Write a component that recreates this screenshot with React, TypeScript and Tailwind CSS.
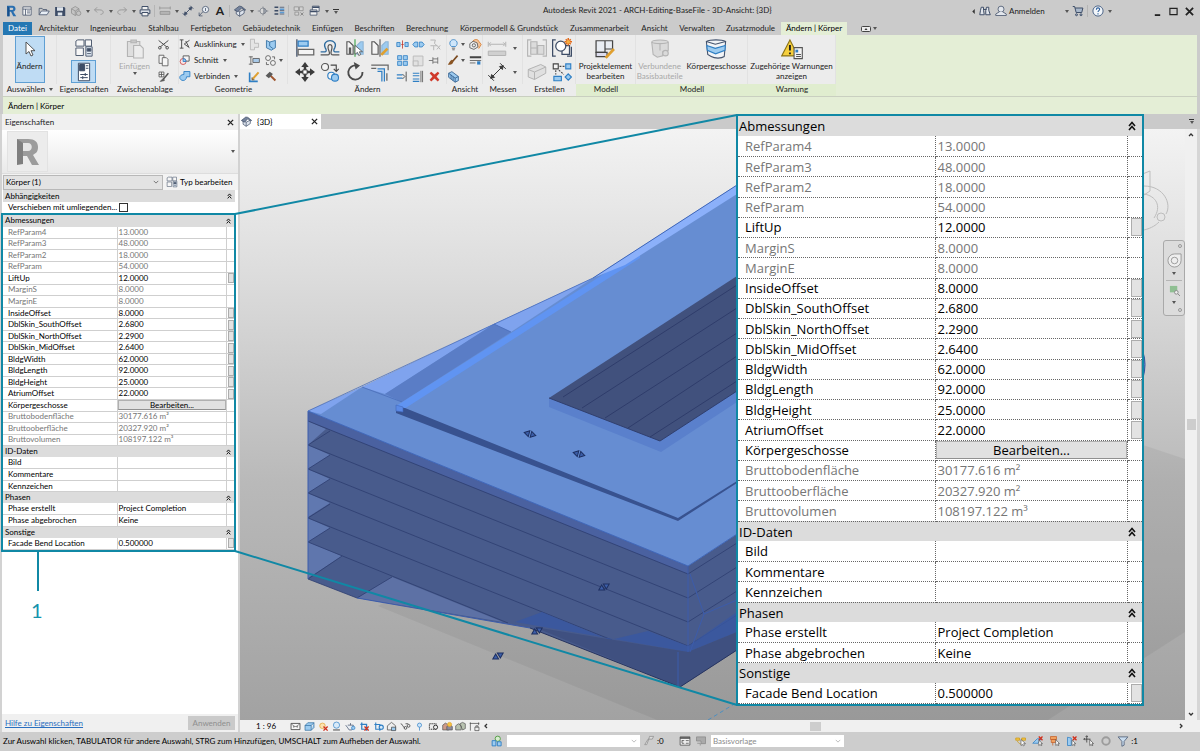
import type { ReactNode } from "react";

const INK = "#3d4c66";
const BLUE = "#9ccbf0";
const EDGE = "#2f7fc4";
const GREY = "#b4b4b4";

const icons: Record<string, ReactNode> = {
  revit: (
    <>
      <path d="M3 1h7c3 0 4 2 4 4s-1 3-3 4l4 6h-4L8 9H6v6H3z" fill="#2a6fb0" />
      <path d="M6 3.500h3.500c2 0 2 3 0 3H6z" fill="#cbcbcb" />
      <path d="M3 1l3 2.500V15H3z" fill="#17508c" />
    </>
  ),
  home: (
    <g fill="none" stroke={INK}>
      <path d="M2.500 2.500h11v11h-11z" fill="#f4f4f4" />
      <path d="M2.500 5.500h11M6 5.500v8M8 8h4M8 10.500h4" />
    </g>
  ),
  open: (
    <g fill="none" stroke={INK}>
      <path d="M1.500 13V4.500h4l1 1.500h5v2" />
      <path d="M1.500 13l3-5h10.500l-3 5z" fill="#e8eef5" />
    </g>
  ),
  save: (
    <>
      <path d="M1.500 2.500h12l1.500 1.500v10.500H1.500z" fill={INK} />
      <path d="M4 3h8v4.500H4zM5 10h6v4H5z" fill="#dfe5ec" />
    </>
  ),
  sync: (
    <g fill="#c4c4c4" stroke="#8e8e8e">
      <path d="M2 5l5-3 5 3v6l-5 3-5-3z" />
      <path d="M2 5l5 3 5-3M7 8v6" fill="none" />
      <circle cx="11.500" cy="11" r="3" />
    </g>
  ),
  undo: <path d="M5.500 3L2 6.500 5.500 10M2 6.500h7c6 0 6 6 1 6" fill="none" stroke="#999" strokeWidth="1.300" />,
  redo: <path d="M10.500 3L14 6.500 10.500 10M14 6.500H7c-6 0-6 6-1 6" fill="none" stroke="#999" strokeWidth="1.300" />,
  print: (
    <g stroke={INK} fill="#f2f2f2" strokeWidth="1.300">
      <path d="M4 6V2h8v4" />
      <path d="M1.500 6.500h13v5h-13z" fill="#d9dee6" />
      <path d="M4 10h8v4.500H4z" />
    </g>
  ),
  ruler: (
    <g stroke="#8e8e8e" fill="none">
      <path d="M1 4h14M1 2v4M15 2v4" />
      <path d="M1.500 8.500h13v4h-13z" fill="#b5b5b5" />
    </g>
  ),
  dim: (
    <g stroke={INK} fill={INK}>
      <path d="M3 13L13 3M1 11l4 4M11 1l4 4" strokeWidth="1.200" />
      <path d="M3 13l1-4 3 3zM13 3l-1 4-3-3z" />
    </g>
  ),
  tag: (
    <g stroke={INK} fill="none">
      <circle cx="10" cy="6" r="4.200" fill="#e9eef4" />
      <path d="M10 4v4M6.500 9L1.500 14.500M1.500 10v4.500H6" />
    </g>
  ),
  house: (
    <g stroke={INK} fill="#dfe5ee">
      <path d="M3 6.500l4.500 2.500 6-3v5l-6 4L3 12z" />
      <path d="M7.500 9v6" fill="none" />
      <path d="M.5 6.500l6.500-5 3 .5 5.500 4.500-1.500.5-4-3-5 5z" fill="#75839c" />
    </g>
  ),
  section: (
    <g stroke="#7a7f88" fill="#d8d8d8">
      <path d="M1 8h3M12 8h3M8 2v12" />
      <circle cx="8" cy="8" r="4" />
      <path d="M9 4l4 4-4 4z" fill="#9aa0aa" />
    </g>
  ),
  thin: (
    <>
      <path d="M2 3h5M2 7.500h5M2 12h5" stroke={INK} strokeWidth="2" />
      <path d="M9 3h6M9 7.500h6M9 12h6" stroke={INK} />
      <path d="M9 4.500h6v2H9zM9 9h6v2H9z" fill="#5b9bd5" />
    </>
  ),
  closewin: (
    <g stroke="#8e8e8e" fill="#d3d3d3">
      <path d="M1.500 2.500h6v5h-6zM8.500 2.500h5v5h-5zM2.500 9.500h5v4h-5z" />
      <path d="M10 10l4 4M14 10l-4 4" stroke="#777" />
    </g>
  ),
  switchwin: (
    <g stroke={INK} fill="#f2f2f2">
      <path d="M4.500 1.500h9v7h-9z" />
      <path d="M1.500 6.500h9v7h-9z" />
      <path d="M4.500 3h9M1.500 8.500h9" strokeWidth="2" />
    </g>
  ),
  binoculars: (
    <g stroke={INK} fill="#e2e6ec" strokeWidth="1.300">
      <path d="M3 3h3v4l1 6H1l1-6zM10 3h3v4l2 6H9V7z" />
      <path d="M6 6h4" />
    </g>
  ),
  person: (
    <g stroke={INK} fill="#e2e6ec">
      <circle cx="8" cy="5.500" r="4" />
      <path d="M6 9l-5 3v2h14v-2l-5-3" />
    </g>
  ),
  cart: (
    <g stroke={INK} fill="#a9b8cb" strokeWidth="1.300">
      <path d="M1 2h2.500l2 8h7.500l1.500-6H4" />
      <circle cx="6" cy="13" r="1.300" />
      <circle cx="12" cy="13" r="1.300" />
    </g>
  ),
  help: (
    <>
      <circle cx="8" cy="8" r="6.800" fill="#f2f6fa" stroke="#4a6387" strokeWidth="1.300" />
      <path d="M5.800 6.200c0-3 4.400-3 4.400-.4 0 1.700-2.200 1.700-2.200 3.600M8 11v1.600" fill="none" stroke="#2e5f9a" strokeWidth="1.500" />
    </>
  ),
  cursor: <path d="M4 1v12l3-2.500 2 4.500 2-1-2-4.300h4z" fill="#fff" stroke="#444" strokeWidth=".9" />,
  typeprops: (
    <g stroke="#525f73" fill="#f7f7f7" strokeWidth=".8">
      <path d="M1.500 2.500l1.500-1h5v5h-6.500zM9 1.500h5v5H9zM1.500 8h6v6H1.500z" />
      <path d="M9.500 7h5v7.500h-5z" fill="#e5eef8" />
      <path d="M10.500 8.500h3v2h-3z" fill={INK} />
      <path d="M10.500 12.500h3" />
    </g>
  ),
  props: (
    <g stroke={INK} strokeWidth=".8">
      <path d="M3.500 1h9v14h-9z" fill="#fff" />
      <path d="M4.500 2h4v5h-4z" fill={INK} />
      <path d="M9.500 3h2M9.500 5h2M5 10h6M5 12.500h6M9 8.800v2.400M7 11.300v2.400" />
    </g>
  ),
  paste: (
    <g stroke={GREY} fill="#dedede" strokeWidth=".8">
      <path d="M2.500 2.500h9v11h-9z" />
      <path d="M5 1.500h4v2H5z" fill="#c8c8c8" />
      <path d="M7 5.500h5l2 2v7H7z" fill="#ececec" />
    </g>
  ),
  cut: (
    <g stroke="#4a4a4a" fill="none" strokeWidth="1.200">
      <path d="M2 3l10 8M14 3L4 11" />
      <circle cx="3.500" cy="12" r="1.600" />
      <circle cx="12.500" cy="12" r="1.600" />
    </g>
  ),
  copy: (
    <g stroke="#555" fill="#f6f6f6">
      <path d="M2.500 1.500h6v10h-6z" />
      <path d="M6.500 4.500h5l2 2v8h-7z" />
    </g>
  ),
  match: (
    <g stroke="#555" fill="none">
      <path d="M2.500 2.500h6v6h-6zM2.500 5.500h6M5.500 2.500v6" fill="#f6f6f6" />
      <path d="M14 4L8 11" strokeWidth="1.800" />
      <path d="M8 10l-4 4 5-1z" fill="#555" />
    </g>
  ),
  cope: (
    <g stroke="#444" fill="none" strokeWidth="1.200">
      <path d="M1 2.500h5M3.500 2.500v11M1 13.500h5" />
      <path d="M14 3L7 8l7 5M9 4l4 8" />
    </g>
  ),
  cutgeo: (
    <g strokeWidth="1.200">
      <path d="M5.500 2.500h8v7h-8z" fill="#f6f6f6" stroke="#555" />
      <circle cx="5.500" cy="10" r="4" fill="#f8e4e4" stroke="#c55" />
      <path d="M5.500 6a4 4 0 014 4h-4z" fill={BLUE} stroke={EDGE} />
    </g>
  ),
  join: (
    <g fill={BLUE} stroke={EDGE} strokeWidth="1.200">
      <path d="M6.500 2h8v7H10c0 3-2 5-4.500 5S1 12 1 10s2-4 5.500-4z" />
    </g>
  ),
  wallcut: (
    <g stroke={GREY} fill="#e4e4e4">
      <path d="M3 1.500h5v5h5v5H8v3H3z" />
    </g>
  ),
  splitface: (
    <g stroke="#2c6a9e" fill={BLUE}>
      <path d="M3 3l4 2 7-2v9l-5 3-6-3z" />
      <path d="M7 5v5l4 3" fill="none" />
    </g>
  ),
  beam: (
    <g stroke="#555" fill="#f2f2f2">
      <path d="M1 3.500h5M1 12.500h5M3.500 3v10" />
      <path d="M6 5.500h8v5H6z" fill="#a8c9e8" />
    </g>
  ),
  gears: (
    <g stroke="#555" fill="#f2f2f2">
      <circle cx="5" cy="5" r="3" />
      <circle cx="11" cy="11" r="3" />
      <path d="M10 3.500h3v3M3 10v3h3" fill="none" />
    </g>
  ),
  wall: (
    <>
      <path d="M2 3v11h10" stroke={EDGE} strokeWidth="2" fill="none" />
      <path d="M5 12l8-9" stroke="#e0a030" strokeWidth="2.500" />
      <path d="M5 9v3h3" stroke="#555" fill="none" />
    </>
  ),
  hammer: (
    <>
      <path d="M7 6l7 7" stroke="#a0562f" strokeWidth="2.500" />
      <path d="M2 7l5-5 4 3-5 5z" fill="#5a5a5a" />
    </>
  ),
  align: (
    <g strokeWidth="1">
      <path d="M1.500 1v14" stroke={INK} />
      <path d="M2.500 2.500h8v4h-8z" fill={BLUE} stroke={EDGE} />
      <path d="M2.500 9h12.500v4.500H2.500z" fill="#f4f4f4" stroke="#666" />
    </g>
  ),
  offset: (
    <g fill="none">
      <path d="M.5 11h3.500c1.500 0 1-2 .2-3C2.500 4.500 5 2 8 2s5.500 2.500 3.800 6c-.8 1-1.300 3 .2 3h3.500" stroke="#2c6a9e" />
      <path d="M.5 13.500h5.500c1.500 0 2-1 1.200-3C6.500 9 6 8 6.500 6.500c.5-1.600 2.500-1.600 3 0 .4 1.500 0 2.500-.5 4-.6 2 0 3 1.500 3h5" stroke="#555" />
    </g>
  ),
  mirroraxis: (
    <g strokeWidth=".9">
      <path d="M1.500 3h2l3 3v7h-2v-5l-1 0v5h-2z" fill="#f4f4f4" stroke="#555" />
      <path d="M14.500 3h-2l-3 3v7h5z" fill={BLUE} stroke="#8fb5d6" />
      <path d="M8 1v14" stroke="#3da54a" />
      <path d="M8 6v7l2-1.500 1 2.500 1.500-.7-1-2.300h2.500z" fill="#fff" stroke="#444" strokeWidth=".6" />
    </g>
  ),
  mirrordraw: (
    <g strokeWidth=".9">
      <path d="M1.500 3h2l3 3v7h-5z" fill="#f4f4f4" stroke="#555" />
      <path d="M14.500 3h-2l-3 3v7h5z" fill={BLUE} stroke="#8fb5d6" />
      <path d="M8 1v14" stroke="#555" />
      <path d="M9 13.500l5-5" stroke="#e0a030" strokeWidth="2.200" />
    </g>
  ),
  move: (
    <g fill="#3b3b3b">
      <path d="M8 0l3 4H9v3H7V4H5zM8 16l3-4H9V9H7v3H5zM0 8l4-3v2h3v2H4v2zM16 8l-4-3v2H9v2h3v2z" />
      <path d="M6.300 6.300h3.400v3.400H6.300z" fill="#fff" stroke="#3b3b3b" strokeWidth=".8" />
    </g>
  ),
  copyobj: (
    <g strokeWidth=".9">
      <circle cx="4" cy="4" r="2.800" fill="#f4f4f4" stroke="#555" />
      <circle cx="9" cy="11" r="2.800" fill="#f4f4f4" stroke={EDGE} />
      <circle cx="12" cy="12.500" r="2.800" fill={BLUE} stroke={EDGE} />
      <path d="M8.500 2.500H13V7M11 5.500l2 2 2-2" fill="none" stroke="#444" />
    </g>
  ),
  rotate: (
    <>
      <path d="M9.500 2.800A5.700 5.700 0 1014 8" fill="none" stroke="#4a4a4a" strokeWidth="1.500" />
      <path d="M7 0l5 2.800L8.500 6z" fill="#4a4a4a" />
    </>
  ),
  trim: (
    <g fill="none">
      <path d="M6 5.500h5.500v10M6 7.500h3.500v8" stroke={EDGE} />
      <path d="M1 2.500h14M1 5h4M14.500 2.500v4M13.500 9v6" stroke="#666" />
    </g>
  ),
  split: (
    <g fill={BLUE} stroke={EDGE}>
      <path d="M1 5.500h4v5H1zM11 5.500h4v5h-4z" />
      <path d="M8 3v10M6.500 8h3" stroke="#c0392b" />
    </g>
  ),
  splitgap: (
    <g fill={BLUE} stroke={EDGE}>
      <path d="M1 8l2.500-3H7v6H3.500zM15 8l-2.500-3H9v6h3.500z" />
    </g>
  ),
  unpin: (
    <g fill="none" stroke={GREY} strokeWidth="1.200">
      <path d="M3 2.500h6l-1 4 3 3H3M7 10v5M11 9l4 5M15 9l-4 5" />
    </g>
  ),
  array: (
    <g fill={BLUE} stroke={EDGE}>
      <path d="M2 2h5v5H2zM9 2h5v5H9zM2 9h5v5H2zM9 9h5v5H9z" />
    </g>
  ),
  scale: (
    <g fill="#e2e2e2" stroke={GREY}>
      <path d="M1.500 2.500h12v12h-12z" />
      <path d="M1.500 8.500h6v6h-6z" />
    </g>
  ),
  pin: (
    <g fill="#e2e2e2" stroke="#666">
      <path d="M1 8h5M6 4v8M6 6h6M6 10h6M12 4v8" />
    </g>
  ),
  trimone: (
    <g fill="none">
      <path d="M1 6h7M1 10h7" stroke={EDGE} strokeWidth="1.500" />
      <path d="M12.500 2v12M8 5l3 3-3 3" stroke="#555" strokeWidth="1.200" />
    </g>
  ),
  trimmany: (
    <g fill="none">
      <path d="M1 4h8M1 7h8M1 11h8M1 14h8" stroke={EDGE} strokeWidth="1.300" />
      <path d="M13 1v14M11 1v14" stroke="#555" />
    </g>
  ),
  remove: <path d="M2 4l2-2 4 3.500L12 2l2 2-3.500 4L14 12l-2 2-4-3.500L4 14l-2-2 3.500-4z" fill="#d03a2c" />,
  bulb: (
    <g fill="#cfe6fa" stroke={EDGE}>
      <path d="M5.500 10.500C1.500 7 4 2 8 2s6.500 5 2.500 8.500z" />
      <path d="M6 12.500h4M6.500 14.500h3" stroke="#555" />
    </g>
  ),
  paint: (
    <>
      <path d="M13 2L7 9" stroke="#7a4a20" strokeWidth="2" />
      <path d="M8 8l-2-1c-3 1-3 4-5 6 4 1 7-1 7-5z" fill="#8a5423" />
    </>
  ),
  box3d: (
    <g fill={BLUE} stroke="#2c5a8a">
      <path d="M2 4l4-2 8 6v5l-4 2-8-6z" />
      <path d="M2 4l8 6 4-2M10 10v5M5 6v5M7.500 8v5" fill="none" />
    </g>
  ),
  override: (
    <g stroke="#555" fill="#ececec">
      <path d="M4 5c2-4 7-4 8-1l3 4-3 5" stroke="#d97a2b" fill="#f3c39a" />
      <path d="M1 7l4-3 5 2 1 5-5 3-5-2z" />
      <circle cx="6" cy="9" r="2" fill="none" />
    </g>
  ),
  lines: (
    <>
      <path d="M1 4h14" stroke="#444" strokeWidth="2.500" />
      <path d="M1 8h14M1 11h7" stroke="#555" />
      <path d="M10 9h4v4h-4z" fill={EDGE} />
    </>
  ),
  measure: (
    <g stroke={GREY} fill="#d0d0d0">
      <path d="M2 5h12M1 3v4M15 3v4M3 3.500L1.500 5 3 6.500M13 3.500L14.500 5 13 6.500" fill="none" strokeWidth=".8" />
      <path d="M1 10.500h14V14H1z" strokeWidth=".8" />
    </g>
  ),
  measurediag: (
    <g stroke="#3b3b3b" fill="#3b3b3b" strokeWidth=".8">
      <path d="M3 13L13 3M1 10.500L5.500 15M10.500 1L15 5.500" />
      <path d="M3 13l.7-3 2.300 2.300zM13 3l-.7 3L10 3.700z" />
    </g>
  ),
  group: (
    <g stroke={GREY} fill="none" strokeWidth=".9">
      <path d="M3.500 1.500h-3v13h3M12.500 1.500h3v13h-3" />
      <path d="M3 3h5v5H3zM3 8h5v5H3zM8.500 6h5v7h-5z" fill="#dcdcdc" />
    </g>
  ),
  assembly: (
    <g stroke={INK} fill="none" strokeWidth="1">
      <path d="M3 1.500H.5v13H3M12 14.500h3.500V7" />
      <path d="M8 6h6v7H8z" fill="#f4f4f4" />
      <circle cx="7" cy="6.500" r="4" fill="#fff" />
      <path d="M13 0v6M10 3h6M11 1l4 4M15 1l-4 4" stroke="#e26a1b" strokeWidth="1.200" />
      <circle cx="13" cy="3" r="1.500" fill="#f5b042" stroke="none" />
    </g>
  ),
  similar: (
    <g stroke={GREY} fill="#e0e0e0" strokeWidth=".8">
      <path d="M1 6l10-4 4 2v5l-9 5-5-2z" />
      <path d="M1 6l5 2 9-4M6 8v6" fill="none" />
    </g>
  ),
  family: (
    <g strokeWidth=".9">
      <path d="M1 1.500h4v4H1z" fill="#f4f4f4" stroke="#444" />
      <path d="M11 1.500h4v4h-4zM1.500 11.500h6v3.500h-6z" fill={BLUE} stroke={EDGE} />
      <path d="M6 3.500h4M5.500 6.500l4 3.500M3 6.500V10" stroke="#444" strokeDasharray="1.500 1" />
      <path d="M13 9.500l2.500 2.500-2.500 2.500L10.500 12z" fill={BLUE} stroke={EDGE} />
    </g>
  ),
  editmass: (
    <g strokeWidth=".9">
      <path d="M1.500 2h6.500v8.500H1.500zM8 2h5.500v6H8z" fill="#e9edf3" stroke="#444" />
      <path d="M1.500 10.500h8v3h-8z" fill="#dde" stroke="#444" />
      <path d="M8.500 14.500l6-6.500" stroke="#e0a030" strokeWidth="2" />
    </g>
  ),
  joined: (
    <g stroke={GREY} fill="#dadada" strokeWidth=".8">
      <path d="M2 3c0-2 12-2 12 0v6c-1 1-3 1-4 1v3L6 14 3 12z" />
      <path d="M2 3c2 1.500 10 1.500 12 0M8 4.500V9" fill="none" />
      <circle cx="12" cy="11" r="2" />
    </g>
  ),
  floors: (
    <g stroke="#44546e" fill="#f2f4f7" strokeWidth=".8">
      <path d="M1 2.500c3-1.500 11-1.500 14 0l-1 11c-2 1.500-7 1.500-9.500 0L2 12z" />
      <path d="M1.300 5.500l6.200 2 7.300-2-.3 3.500-6.800 2.500-6-2.500z" fill={BLUE} stroke={EDGE} />
      <path d="M1 2.500l6.500 2 7.500-2" fill="none" />
    </g>
  ),
  warning: (
    <g strokeWidth=".8">
      <path d="M6.500 1.500l6 11.500H.5z" fill="#f6cf3c" stroke="#8a7216" />
      <path d="M6.500 5v4M6.500 10.500v1.300" stroke="#222" strokeWidth="1.400" />
      <path d="M9.500 7h6v8h-6z" fill="#f4f4f4" stroke="#555" />
      <path d="M10.500 8.500h2v2h-2z" fill={EDGE} />
      <path d="M11 12h3.500M11 13.500h3.500" stroke="#555" />
    </g>
  ),
  detail: (
    <g stroke="#444" fill="#f7f7f7" strokeWidth="1.200">
      <path d="M1.500 3.500h13v9h-13z" />
      <path d="M5 8h6M5.500 6v4M10.500 6v4M2 4l3 3M14 4l-3 3" fill="none" strokeWidth=".8" />
    </g>
  ),
  visual: (
    <g fill={BLUE} stroke="#2c6a9e">
      <path d="M1.500 6.500h9v7h-9zM1.500 6.500l4-4h9l-4 4M10.500 13.500l4-4v-7" />
    </g>
  ),
  sunoff: (
    <>
      <circle cx="6.500" cy="7" r="4" fill="#fbe2b0" stroke="#e0a030" />
      <path d="M8 8l6 6M14 8l-6 6" stroke="#d0301c" strokeWidth="2" />
    </>
  ),
  shadow: (
    <g fill="#d9ebf9" stroke={EDGE}>
      <circle cx="8" cy="6" r="4.500" />
      <path d="M3 13h10" strokeWidth="2" stroke="#777" />
    </g>
  ),
  teapot: (
    <g fill="#e9eef3" stroke={INK}>
      <path d="M4 6h8v4l-2 3H6l-2-3L1 6M8 3v3" />
      <circle cx="12" cy="10" r="2.500" fill={BLUE} stroke={EDGE} />
    </g>
  ),
  cropoff: (
    <>
      <path d="M4 2v10h10M2 5h9v9" fill="none" stroke={EDGE} strokeWidth="1.800" />
      <path d="M8 8l6 6M14 8l-6 6" stroke="#d0301c" strokeWidth="2" />
    </>
  ),
  crop: (
    <g fill="none" stroke={EDGE} strokeWidth="1.600">
      <path d="M4 2v10h8M2 5h8v9" />
      <circle cx="12" cy="9" r="3" fill="#d9ebf9" />
    </g>
  ),
  lock3d: (
    <g fill="#eee" stroke="#444">
      <path d="M2 7l6-5 6 5v6H2z" />
      <path d="M8 9h6v5H8z" fill={BLUE} />
    </g>
  ),
  glasses: (
    <g fill="none" stroke="#444" strokeWidth="1.200">
      <path d="M1 4c3 0 2 4 6 6" />
      <circle cx="8" cy="10" r="2" />
      <circle cx="12.500" cy="7" r="2" />
      <path d="M8 4l4 0" />
    </g>
  ),
  pinbulb: (
    <g fill="#cfe6fa" stroke={EDGE}>
      <circle cx="8" cy="6" r="3" />
      <path d="M8 9v5" />
    </g>
  ),
  tempview: (
    <g fill="#eee" stroke="#333" strokeWidth="1.400">
      <path d="M2 4h10v8H2z" strokeDasharray="2 1" />
      <circle cx="11" cy="9" r="3" />
    </g>
  ),
  analytic: (
    <g stroke="#555">
      <path d="M1 6l4-3 5 3v7H1z" fill="#c98" />
      <path d="M7 8l4-3 4 3v5H7z" fill="#8e8a9a" />
      <circle cx="11" cy="5" r="3" fill="#f5c542" stroke="#e0a030" />
    </g>
  ),
  displace: (
    <g fill="#b8c2b0" stroke="#555">
      <path d="M1 7l4-3 4 3v6H1zM7 4l4-2 4 2v7l-4 2z" />
    </g>
  ),
  constraints: (
    <g fill="#eee" stroke="#444">
      <path d="M1 3.500h14M2 2v12M14 2v4M8.500 9h6v5h-6z" />
      <path d="M10 9V7h3v2" fill="none" />
    </g>
  ),
  worksets: (
    <g strokeWidth="1.200">
      <circle cx="9" cy="5" r="3.500" fill="#d7ecd0" stroke="#4c9a3c" />
      <path d="M1.500 7.500h5v7h-5zM8.500 9h5v5.500h-5z" fill={BLUE} stroke={EDGE} />
    </g>
  ),
  brush: (
    <g stroke="#888" fill="#ddd">
      <path d="M8 2h6l-2 4H7zM7 6l-3 8H1l5-8z" />
    </g>
  ),
  options: (
    <g stroke="#444" fill="#f4f4f4">
      <path d="M1.500 2.500h13v11h-13z" />
      <path d="M1.500 4h13" strokeWidth="2" />
      <path d="M4 7v4h3M9 7.500h4M9 11h4M4 7.500h3" fill="none" />
    </g>
  ),
  optionset: (
    <g stroke="#888" fill="#aaa">
      <path d="M2 2.500h12v9H8V8H2z" />
      <path d="M3 11h4v3" fill="none" />
    </g>
  ),
  sellink: (
    <g>
      <path d="M1 4h5v3H1zM9 4h5v3H9z" fill="#f5c542" stroke="#c99a1c" />
      <path d="M3 8c2 4 5 4 5 4" stroke="#c99a1c" fill="none" />
      <path d="M8 6v8l2-1.500 1 2 1.500-.7-1-2.300H14z" fill="#fff" stroke="#444" strokeWidth=".8" />
    </g>
  ),
  selunder: (
    <g>
      <path d="M1 11l6-6h5l-4 6z" fill={BLUE} stroke={EDGE} />
      <path d="M9 2l5 5M14 2L9 7" stroke="#d0301c" strokeWidth="1.800" />
      <path d="M9 7v7l2-1.500 1 2 1-.7-1-2.300h2z" fill="#fff" stroke="#444" strokeWidth=".8" />
    </g>
  ),
  selpinned: (
    <g>
      <path d="M2 2h8v4H2zM3 6h6v4H3z" fill="#f0a060" stroke="#c5622a" />
      <path d="M5 10v4" stroke="#c5622a" />
      <path d="M9 6v8l2-1.500 1 2 1-.7-1-2.300h2z" fill="#fff" stroke="#444" strokeWidth=".8" />
    </g>
  ),
  selface: (
    <g>
      <path d="M2 3l5 1v10H2z" fill={BLUE} stroke={EDGE} />
      <path d="M9 2l5 5M14 2L9 7" stroke="#d0301c" strokeWidth="1.800" />
      <path d="M8 7v7l2-1.500 1 2 1-.7-1-2.300h2z" fill="#fff" stroke="#444" strokeWidth=".8" />
    </g>
  ),
  dragsel: (
    <g stroke="#333" fill="none">
      <path d="M5 1v9M1 5.500h9M3.500 2.500L5 1l1.500 1.500M2.500 4L1 5.500 2.500 7" />
      <path d="M9 6v8l2-1.500 1 2 1-.7-1-2.300h2z" fill="#fff" strokeWidth=".8" />
    </g>
  ),
  ring: <circle cx="8" cy="8" r="5" fill="none" stroke="#9c9c9c" strokeWidth="2.500" />,
  filter: <path d="M1.500 2.500h13l-5 6v5l-3 1.500V8.500z" fill="#c9dcee" stroke="#44546e" />,
};

function Icon({ name, className = "size-[14px]" }: { name: string; className?: string }) {
  return (
    <svg viewBox="0 0 16 16" className={`shrink-0 ${className}`} aria-hidden="true">
      {icons[name]}
    </svg>
  );
}

function Caret({ className = "w-[7px]" }: { className?: string }) {
  return (
    <span className={`flex shrink-0 justify-center ${className}`}>
      <svg viewBox="0 0 4 3" className="h-[3px] w-[4px]" aria-hidden="true">
        <path d="M0 0h4L2 3z" fill="#555" />
      </svg>
    </span>
  );
}

function Divider() {
  return <span className="mx-px h-[12px] w-[2px] shrink-0 border-l border-[#b5b5b5]" />;
}

function Tool({ name, label }: { name: string; label: string }) {
  return (
    <button type="button" aria-label={label} className="flex w-[16px] shrink-0 justify-center">
      <Icon name={name} className="size-[12px]" />
    </button>
  );
}

function TitleBar() {
  return (
    <header className="flex h-[22px] items-center bg-[#cbcbcb] pl-[3px] text-[#222]">
      <div className="flex w-[540px] shrink-0 items-center">
        <Tool name="revit" label="Revit" />
        <Tool name="home" label="Start" />
        <span className="w-px" />
        <Tool name="open" label="Öffnen" />
        <Tool name="save" label="Speichern" />
        <Tool name="sync" label="Synchronisieren" />
        <Caret />
        <Tool name="undo" label="Rückgängig" />
        <Caret />
        <Tool name="redo" label="Wiederherstellen" />
        <Caret />
        <Tool name="print" label="Drucken" />
        <Divider />
        <Tool name="ruler" label="Messen" />
        <Caret />
        <Tool name="dim" label="Ausgerichtete Bemaßung" />
        <Tool name="tag" label="Nach Kategorie beschriften" />
        <button type="button" aria-label="Text" className="w-[16px] text-[12px] leading-[14px] font-bold">
          A
        </button>
        <Divider />
        <Tool name="house" label="3D-Standardansicht" />
        <Caret />
        <Tool name="section" label="Schnitt" />
        <Tool name="thin" label="Dünne Linien" />
        <Divider />
        <Tool name="closewin" label="Inaktive Ansichten schließen" />
        <Tool name="switchwin" label="Fenster wechseln" />
        <Caret />
        <button type="button" aria-label="Anpassen" className="flex w-[12px] flex-col items-center gap-px">
          <span className="h-px w-[6px] bg-[#333]" />
          <Caret />
        </button>
      </div>
      <h1 className="grow pb-[2px] text-[8px] whitespace-nowrap">
        Autodesk Revit 2021 - ARCH-Editing-BaseFile - 3D-Ansicht: &#123;3D&#125;
      </h1>
      <div className="flex shrink-0 items-center">
        <svg viewBox="0 0 3 6" className="mr-[2px] h-[5px] w-[3px]" aria-hidden="true">
          <path d="M3 0v6L0 3z" fill="#333" />
        </svg>
        <Tool name="binoculars" label="Suchen" />
        <Tool name="person" label="Konto" />
        <button type="button" className="w-[54px] text-left text-[8px]">
          Anmelden
        </button>
        <Caret />
        <Tool name="cart" label="App Store" />
        <Divider />
        <Tool name="help" label="Hilfe" />
        <Caret />
      </div>
      <div className="ml-[36px] flex shrink-0 items-center pr-[3px]">
        {["Minimieren", "Maximieren", "Schließen"].map((label, index) => (
          <button key={label} type="button" aria-label={label} className="flex w-[16px] justify-center">
            <svg viewBox="0 0 10 10" className="size-[9px]" fill="none" stroke="#222" aria-hidden="true">
              {index === 0 && <path d="M2 9h6" strokeWidth="2" />}
              {index === 1 && <path d="M1 1.500h8v7H1z" strokeWidth="1.300" />}
              {index === 2 && <path d="M1 1l8 8M9 1L1 9" strokeWidth="2" />}
            </svg>
          </button>
        ))}
      </div>
    </header>
  );
}

const tabs = [
  { label: "Architektur", width: "w-[51px]" },
  { label: "Ingenieurbau", width: "w-[58px]" },
  { label: "Stahlbau", width: "w-[43px]" },
  { label: "Fertigbeton", width: "w-[52px]" },
  { label: "Gebäudetechnik", width: "w-[69px]" },
  { label: "Einfügen", width: "w-[43px]" },
  { label: "Beschriften", width: "w-[51px]" },
  { label: "Berechnung", width: "w-[54px]" },
  { label: "Körpermodell & Grundstück", width: "w-[110px]" },
  { label: "Zusammenarbeit", width: "w-[71px]" },
  { label: "Ansicht", width: "w-[39px]" },
  { label: "Verwalten", width: "w-[46px]" },
  { label: "Zusatzmodule", width: "w-[61px]" },
];

function TabBar() {
  return (
    <nav className="flex h-[13px] items-stretch bg-[#cbcbcb] pl-[3px] text-[8px] leading-[13px] whitespace-nowrap text-[#222]">
      <button type="button" className="w-[29px] bg-[#2477b3] text-white">
        Datei
      </button>
      <span className="w-px" />
      {tabs.map((tab) => (
        <button key={tab.label} type="button" className={`flex shrink-0 justify-center ${tab.width}`}>
          {tab.label}
        </button>
      ))}
      <button type="button" className="flex w-[66px] shrink-0 justify-center bg-[#e4eed6] text-black">
        Ändern | Körper
      </button>
      <button type="button" aria-label="Multifunktionsleiste minimieren" className="ml-[14px] flex items-center">
        <svg viewBox="0 0 10 6" className="h-[6px] w-[10px]" aria-hidden="true">
          <rect x=".5" y=".5" width="9" height="5" rx="1" fill="#eee" stroke="#444" />
          <path d="M3.500 4L5 2l1.500 2z" fill="#333" />
        </svg>
        <Caret />
      </button>
    </nav>
  );
}

type GroupProps = {
  title: string;
  width: string;
  green?: boolean;
  menu?: boolean;
  children: ReactNode;
};

function Group({ title, width, green, menu, children }: GroupProps) {
  return (
    <section className={`flex shrink-0 flex-col ${width}`}>
      <div className="flex h-[49px] justify-center border-r border-[#e2e2e2] bg-[#ececec] pt-px">{children}</div>
      <h2
        className={`flex h-[12px] items-center justify-center pb-px text-[8px] leading-[11px] whitespace-nowrap text-[#222] ${
          green ? "bg-[#e0edcf]" : "bg-[#ececec]"
        }`}
      >
        {title}
        {menu && <Caret className="ml-[4px]" />}
      </h2>
    </section>
  );
}

function SmallTool({ name, label, caret }: { name: string; label: string; caret?: boolean }) {
  return (
    <button type="button" aria-label={label} className="flex h-[16px] items-center justify-center">
      <Icon name={name} className="size-[13px]" />
      {caret && <Caret />}
    </button>
  );
}

function LargeTool({ name, label }: { name: string; label: string }) {
  return (
    <button type="button" aria-label={label} className="flex h-[24px] items-center justify-center">
      <Icon name={name} className="size-[20px]" />
    </button>
  );
}

function LabelTool({ name, lines, disabled }: { name: string; lines: string[]; disabled?: boolean }) {
  return (
    <button
      type="button"
      disabled={disabled}
      className={`flex flex-col items-center text-[8px] leading-[10px] whitespace-nowrap ${
        disabled ? "text-[#a8a8a8]" : "text-[#222]"
      }`}
    >
      <span className="flex h-[25px] items-center">
        <Icon name={name} className="size-[22px]" />
      </span>
      {lines.map((line) => (
        <span key={line}>{line}</span>
      ))}
    </button>
  );
}

function Ribbon() {
  return (
    <div className="flex h-[62px] border-x-3 border-b border-x-[#cbcbcb] border-b-[#c9cfc0] bg-[#e4eed6]">
      <Group title="Auswählen" width="w-[54px]" menu>
        <button
          type="button"
          className="flex h-[47px] w-[30px] flex-col items-center border border-[#5f9fd3] bg-[#bfdcf4] pt-[4px] text-[8px] text-[#222]"
        >
          <Icon name="cursor" className="size-[16px]" />
          <span className="pt-[4px] leading-[10px]">Ändern</span>
        </button>
      </Group>
      <Group title="Eigenschaften" width="w-[54px]">
        <div className="flex flex-col">
          <LargeTool name="typeprops" label="Typeneigenschaften" />
          <button
            type="button"
            aria-label="Eigenschaften"
            className="flex h-[23px] w-[25px] items-center justify-center border border-[#5f9fd3] bg-[#bfdcf4]"
          >
            <Icon name="props" className="size-[20px]" />
          </button>
        </div>
      </Group>
      <Group title="Zwischenablage" width="w-[68px]">
        <div className="flex gap-[7px]">
          <div className="flex flex-col items-center gap-px">
            <LabelTool name="paste" lines={["Einfügen"]} disabled />
            <Caret />
          </div>
          <div className="flex flex-col">
            <SmallTool name="cut" label="Ausschneiden" />
            <SmallTool name="copy" label="Kopieren" />
            <SmallTool name="match" label="Typ anpassen" />
          </div>
        </div>
      </Group>
      <Group title="Geometrie" width="w-[109px]">
        <div className="flex w-full justify-between pr-[2px]">
          <div className="flex flex-col text-[8px] text-[#222]">
            {[
              { name: "cope", label: "Ausklinkung" },
              { name: "cutgeo", label: "Schnitt" },
              { name: "join", label: "Verbinden" },
            ].map((tool) => (
              <button key={tool.label} type="button" className="flex h-[16px] items-center gap-[3px]">
                <Icon name={tool.name} className="size-[12px]" />
                {tool.label}
                <Caret />
              </button>
            ))}
          </div>
          <div className="grid grid-cols-[16px_21px] justify-items-start">
            <SmallTool name="wallcut" label="Kontur" />
            <SmallTool name="splitface" label="Fläche teilen" />
            <SmallTool name="beam" label="Träger" />
            <SmallTool name="gears" label="Wandverbindungen" caret />
            <SmallTool name="wall" label="Wände" />
            <SmallTool name="hammer" label="Abbruch" />
          </div>
        </div>
      </Group>
      <Group title="Ändern" width="w-[159px]">
        <div className="flex gap-[2px]">
          <div className="grid grid-cols-[25px_25px_25px_25px]">
            <LargeTool name="align" label="Ausrichten" />
            <LargeTool name="offset" label="Versatz" />
            <LargeTool name="mirroraxis" label="Spiegeln Achse wählen" />
            <LargeTool name="mirrordraw" label="Spiegeln Achse zeichnen" />
            <LargeTool name="move" label="Verschieben" />
            <LargeTool name="copyobj" label="Kopieren" />
            <LargeTool name="rotate" label="Drehen" />
            <LargeTool name="trim" label="Stutzen" />
          </div>
          <div className="grid grid-cols-[16px_16px_16px]">
            <SmallTool name="split" label="Element teilen" />
            <SmallTool name="splitgap" label="Teilen mit Lücke" />
            <SmallTool name="unpin" label="Lösen" />
            <SmallTool name="array" label="Reihe" />
            <SmallTool name="scale" label="Skalieren" />
            <SmallTool name="pin" label="Fixieren" />
            <SmallTool name="trimone" label="Ein Element stutzen" />
            <SmallTool name="trimmany" label="Mehrere Elemente stutzen" />
            <SmallTool name="remove" label="Löschen" />
          </div>
        </div>
      </Group>
      <Group title="Ansicht" width="w-[36px]">
        <div className="grid grid-cols-[22px_14px] justify-items-start">
          <SmallTool name="bulb" label="Ausblenden" caret />
          <SmallTool name="override" label="Überschreiben" />
          <SmallTool name="paint" label="Farbe" caret />
          <SmallTool name="lines" label="Linienart" />
          <SmallTool name="box3d" label="Auswahlrahmen" />
        </div>
      </Group>
      <Group title="Messen" width="w-[40px]">
        <div className="flex flex-col">
          <div className="flex items-center gap-[4px]">
            <LargeTool name="measure" label="Abstand messen" />
            <Caret />
          </div>
          <div className="flex items-center gap-[4px]">
            <LargeTool name="measurediag" label="Bemaßung" />
            <Caret />
          </div>
        </div>
      </Group>
      <Group title="Erstellen" width="w-[53px]">
        <div className="grid grid-cols-[25px_25px]">
          <LargeTool name="group" label="Gruppe" />
          <LargeTool name="assembly" label="Baugruppe" />
          <LargeTool name="similar" label="Teilelemente" />
          <LargeTool name="family" label="Ähnliches erstellen" />
        </div>
      </Group>
      <Group title="Modell" width="w-[60px]" green>
        <LabelTool name="editmass" lines={["Projektelement", "bearbeiten"]} />
      </Group>
      <Group title="Modell" width="w-[112px]" green>
        <div className="flex gap-[4px]">
          <LabelTool name="joined" lines={["Verbundene", "Basisbauteile"]} disabled />
          <LabelTool name="floors" lines={["Körpergeschosse"]} />
        </div>
      </Group>
      <Group title="Warnung" width="w-[88px]" green>
        <LabelTool name="warning" lines={["Zugehörige Warnungen", "anzeigen"]} />
      </Group>
    </div>
  );
}

type Row = {
  label: string;
  value?: string;
  unit?: string;
  muted?: boolean;
  picker?: boolean;
  edit?: boolean;
};

type Category = { title: string; rows: Row[] };

const categories: Category[] = [
  {
    title: "Abmessungen",
    rows: [
      { label: "RefParam4", value: "13.0000", muted: true },
      { label: "RefParam3", value: "48.0000", muted: true },
      { label: "RefParam2", value: "18.0000", muted: true },
      { label: "RefParam", value: "54.0000", muted: true },
      { label: "LiftUp", value: "12.0000", picker: true },
      { label: "MarginS", value: "8.0000", muted: true },
      { label: "MarginE", value: "8.0000", muted: true },
      { label: "InsideOffset", value: "8.0000", picker: true },
      { label: "DblSkin_SouthOffset", value: "2.6800", picker: true },
      { label: "DblSkin_NorthOffset", value: "2.2900", picker: true },
      { label: "DblSkin_MidOffset", value: "2.6400", picker: true },
      { label: "BldgWidth", value: "62.0000", picker: true },
      { label: "BldgLength", value: "92.0000", picker: true },
      { label: "BldgHeight", value: "25.0000", picker: true },
      { label: "AtriumOffset", value: "22.0000", picker: true },
      { label: "Körpergeschosse", edit: true },
      { label: "Bruttobodenfläche", value: "30177.616 m", unit: "²", muted: true },
      { label: "Bruttooberfläche", value: "20327.920 m", unit: "²", muted: true },
      { label: "Bruttovolumen", value: "108197.122 m", unit: "³", muted: true },
    ],
  },
  { title: "ID-Daten", rows: [{ label: "Bild" }, { label: "Kommentare" }, { label: "Kennzeichen" }] },
  {
    title: "Phasen",
    rows: [
      { label: "Phase erstellt", value: "Project Completion" },
      { label: "Phase abgebrochen", value: "Keine" },
    ],
  },
  { title: "Sonstige", rows: [{ label: "Facade Bend Location", value: "0.500000", picker: true }] },
];

function Collapse({ large }: { large?: boolean }) {
  return (
    <svg
      viewBox="0 0 8 10"
      className={large ? "h-[10px] w-[8px]" : "h-[6px] w-[5px]"}
      fill="none"
      stroke="#111"
      strokeWidth="1.600"
      aria-hidden="true"
    >
      <path d="M1 5l3-3.500L7 5M1 9l3-3.500L7 9" />
    </svg>
  );
}

function PropertyTable({ large }: { large?: boolean }) {
  const line = large ? "border-dotted border-[#666]" : "border-solid border-[#cfcfcf]";
  const height = large ? "h-[20px]" : "h-[11px]";

  return (
    <table
      className={`w-full table-fixed border-collapse bg-white text-black ${
        large ? "h-[588px] text-[13px] leading-[16px]" : "h-[335px] text-[8px] leading-[9px]"
      }`}
    >
      <colgroup>
        <col className={large ? "w-[197px]" : "w-[114px]"} />
        <col />
        <col className={large ? "w-[14px]" : "w-[7px]"} />
      </colgroup>
      {categories.map((category) => (
        <tbody key={category.title}>
          <tr className={`bg-[#dcdcdc] ${height}`}>
            <th colSpan={3} scope="rowgroup" className="p-0 text-left font-normal">
              <button
                type="button"
                className={`flex w-full items-center justify-between ${large ? "pr-[6px] pl-px" : "pr-[3px] pl-[2px]"}`}
              >
                {category.title}
                <Collapse large={large} />
              </button>
            </th>
          </tr>
          {category.rows.map((row) => (
            <tr key={row.label} className={`${height} ${row.muted ? "text-[#767676]" : ""}`}>
              <th
                scope="row"
                className={`border-r border-b p-0 text-left font-normal whitespace-nowrap ${line} ${
                  large ? "pl-[7px]" : "pl-[5px]"
                }`}
              >
                {row.label}
              </th>
              <td
                className={`border-r border-b p-0 whitespace-nowrap ${line} ${
                  row.edit ? "" : large ? "pl-[2px]" : "pl-px"
                }`}
              >
                {row.edit ? (
                  <button
                    type="button"
                    className={`block w-full border border-[#b0b0b0] border-b-[#909090] bg-[#e1e1e1] ${
                      large ? "leading-[16px]" : "leading-[8px]"
                    }`}
                  >
                    Bearbeiten...
                  </button>
                ) : (
                  <>
                    {row.value}
                    {row.unit}
                  </>
                )}
              </td>
              <td className={`border-b p-0 ${line}`}>
                {row.picker && (
                  <button
                    type="button"
                    aria-label={`${row.label} zuordnen`}
                    className={`ml-auto block border border-[#adadad] bg-[#e3e3e3] ${
                      large ? "h-[18px] w-[11px]" : "h-[10px] w-[6px]"
                    }`}
                  />
                )}
              </td>
            </tr>
          ))}
        </tbody>
      ))}
    </table>
  );
}

function PropertiesPanel() {
  return (
    <aside className="flex w-[240px] shrink-0 flex-col border-x-2 border-[#d2d2d2] bg-white text-[8px] text-black">
      <div className="flex h-[16px] items-center justify-between bg-[#f0f0f0] pr-[4px] pl-[3px] text-[#222]">
        <h2>Eigenschaften</h2>
        <button type="button" aria-label="Eigenschaften schließen">
          <svg viewBox="0 0 8 8" className="size-[7px]" stroke="#222" strokeWidth="1.500" aria-hidden="true">
            <path d="M1 1l6 6M7 1L1 7" />
          </svg>
        </button>
      </div>
      <div className="flex h-[44px] items-center justify-between border-b border-[#ddd] bg-linear-to-b from-white to-[#e9e9e9] pr-[2px] pl-[5px]">
        <div className="flex size-[41px] items-center justify-center border border-[#e2e2e2] bg-[#ececec]">
          <svg viewBox="0 0 24 30" className="h-[30px] w-[24px]" aria-hidden="true">
            <path d="M1 2h11c7 0 10 3 10 8s-2 6-5 8l6 10h-7l-5-9H7v8H1z" fill="#9c9c9c" />
            <path d="M7 6h5c5 0 5 8 0 8H7z" fill="#e6e6e6" />
            <path d="M1 2l6 4v21l-6 1z" fill="#7f7f7f" />
          </svg>
        </div>
        <Caret />
      </div>
      <div className="flex h-[16px] items-center bg-[#f3f3f3] pl-px">
        <div className="grid w-[160px]">
          <select
            aria-label="Elementtyp"
            className="col-start-1 row-start-1 h-[15px] appearance-none border border-[#b8b8b8] bg-[#e3e3e3] pl-[2px]"
          >
            <option>Körper (1)</option>
          </select>
          <svg
            viewBox="0 0 8 5"
            className="pointer-events-none col-start-1 row-start-1 mr-[4px] h-[4px] w-[6px] self-center justify-self-end"
            fill="none"
            stroke="#555"
            aria-hidden="true"
          >
            <path d="M1 1l3 3 3-3" />
          </svg>
        </div>
        <button type="button" className="ml-[3px] flex items-center gap-[2px] whitespace-nowrap">
          <Icon name="typeprops" className="size-[12px]" />
          Typ bearbeiten
        </button>
      </div>
      <div className="mr-[3px] ml-px flex h-[12px] items-center justify-between bg-[#dcdcdc] pr-[3px] pl-[2px]">
        <h3 className="leading-[12px]">Abhängigkeiten</h3>
        <Collapse />
      </div>
      <div className="ml-px flex h-[11px] items-center pl-[5px]">
        <label htmlFor="move-nearby" className="w-[111px] leading-[11px] whitespace-nowrap">
          Verschieben mit umliegenden...
        </label>
        <input
          id="move-nearby"
          type="checkbox"
          className="size-[9px] appearance-none border border-[#333] bg-white"
        />
      </div>
      <div className="mr-[2px] -ml-px border-2 border-[#1088a5]">
        <PropertyTable />
      </div>
      <div className="flex flex-col items-start pl-[29px] text-[#1593ad]">
        <span className="ml-[6px] h-[39px] w-[2px] bg-[#1088a5]" />
        <span className="pt-[6px] text-[20px] leading-[26px]">1</span>
      </div>
      <div className="mt-auto flex h-[18px] items-center justify-between bg-[#f0f0f0] pr-[3px] pl-[3px]">
        <a href="#hilfe" className="text-[#2a6fc0] underline">
          Hilfe zu Eigenschaften
        </a>
        <button type="button" disabled className="h-[14px] w-[47px] bg-[#cacaca] text-[#8f8f8f]">
          Anwenden
        </button>
      </div>
    </aside>
  );
}

const slabs = [445, 469, 493, 518, 542];
const sideLines = [574, 598, 622, 646];
const grips = [
  { x: 530, y: 434, turn: 15 },
  { x: 579, y: 454, turn: 15 },
  { x: 604, y: 587, turn: -30 },
  { x: 537, y: 631, turn: -30 },
  { x: 498, y: 656, turn: -30 },
];

function ModelDrawing() {
  return (
    <svg
      viewBox="240 129 945 591"
      preserveAspectRatio="xMinYMin slice"
      className="absolute inset-0 size-full"
      role="img"
      aria-label="3D-Ansicht des Körpermodells"
    >
      <defs>
        <linearGradient id="sky" x1="0" y1="0" x2="0" y2="1">
          <stop offset="0" stopColor="#f3f3f3" />
          <stop offset="0.250" stopColor="#dcdcdc" />
          <stop offset="0.600" stopColor="#b9b9b9" />
          <stop offset="1" stopColor="#a2a2a2" />
        </linearGradient>
      </defs>
      <path d="M240 129h945v591H240z" fill="url(#sky)" />
      <path d="M378 606L657 720H1048L1185 632V459L1143 445 737 400z" fill="#000" opacity=".05" />

      {/* facade */}
      <path d="M308 411L688 566 737 534V650L680 687 530 628 357 598 308 579z" fill="#485b8c" />
      <path d="M308 411L688 566V574L308 421z" fill="#4a61a0" />
      <path d="M308 421L326 429 308 445z" fill="#6078b0" />
      {slabs.slice(0, 4).map((y) => (
        <path key={y} d={`M308 ${y}l22 10l-22 14z`} fill="#6078b0" />
      ))}
      <path d="M308 542L342 556 308 578z" fill="#5f76ad" />
      <path d="M392 577L503 622 357 598z" fill="#5d71a5" />
      <g stroke="#2d3d70" strokeWidth=".8" fill="none">
        <path d="M308 421L688 574M308 445L688 598M308 469L688 622M308 493L688 646M308 518L612 640M308 542L508 623" />
        {slabs.map((y) => (
          <path key={y} d={`M308 ${y}l22 -14`} />
        ))}
        <path d="M308 579L342 556M357 598L392 577M308 579L357 598" />
        {sideLines.map((y) => (
          <path key={y} d={`M688 ${y}L737 ${y - 31}`} />
        ))}
      </g>
      <path d="M515 622L542 612 610 640 648 631 688 646 737 612V632L688 652z" fill="#3857a3" opacity=".8" />
      <path d="M534 627L688 652 737 632V650L680 687z" fill="#3f5080" />
      <path d="M530 628L680 687 737 650" fill="none" stroke="#273460" />
      <path d="M308 411V579M688 566V652M678 652V686M690 574L704 614 690 652M704 614L737 600" fill="none" stroke="#3c5cab" />
      <path d="M357 598L530 628" stroke="#3c5cab" />

      {/* roof */}
      <path d="M308 411L362 387 494 324 593 278 737 185V534L688 566z" fill="#668dd2" />
      <path d="M308 411L362 387 321 414z" fill="#7fa3ee" />
      <path d="M362 387L494 324 385 394z" fill="#7fa3ee" />
      <path d="M494 324L593 278 511 332z" fill="#7fa3ee" />
      <path d="M385 394L494 324 511 332 402 402z" fill="#5a7dc6" />
      <path d="M362 387L402 402M494 324L511 332M308 411L593 278" stroke="#4a6dba" fill="none" strokeWidth=".8" />
      <path d="M396 406L593 281 640 250 640 258 404 409z" fill="#6094f2" />
      <path d="M593 278L737 185V194L625 265z" fill="#8bb0fa" />
      <path d="M593 278L737 185" stroke="#3f66b8" />
      <path d="M396 407V413L678 521 737 483V481L678 518 405 408z" fill="#38528f" />
      <path d="M396 405V411L403 412V407z" fill="#5b8ae6" stroke="#3f66b8" strokeWidth=".6" />
      <path d="M308 411L688 566 737 534" fill="none" stroke="#4068bb" />

      {/* atrium */}
      <path d="M549 398V407L661 452 737 402V390L660 441z" fill="#5a80cc" />
      <path d="M549 398L737 276V391L660 441z" fill="#41517d" />
      <path
        d="M563 397L737 285M582 408L737 308M605 418L737 333M628 428L737 356M650 437L737 381M549 398L660 441 737 391"
        fill="none"
        stroke="#2c3a69"
        strokeWidth=".9"
      />

      {grips.map((grip) => (
        <g key={`${grip.x}-${grip.y}`} transform={`translate(${grip.x} ${grip.y}) rotate(${grip.turn})`}>
          <path d="M-6 0l5-3v6zM6 0l-5-3v6z" fill="#3c5ea8" stroke="#1d2f60" strokeWidth="1" />
        </g>
      ))}

      {/* view cube and compass */}
      <path d="M1143 352q4 12 0 26" fill="#668dd2" stroke="#2c4f9c" />
      <g fill="none" stroke="#bdbdbd">
        <path d="M1140 175l10-4v20l-6 4" />
        <path d="M1144 186c20 0 28 18 22 28M1144 230c8-2 12-5 15-8M1144 194c12 2 18 12 10 24" />
        <circle cx="1161" cy="217" r="4" />
      </g>
      <path d="M708 720L736 703" stroke="#4d8fc0" strokeDasharray="4 3" />
    </svg>
  );
}

function NavigationBar() {
  return (
    <div className="absolute top-[111px] right-0 flex h-[76px] w-[22px] flex-col items-center justify-between rounded-[3px] border border-[#a9a9a9] bg-[#dcdcdc] py-[3px]">
      <span className="mr-[2px] size-[4px] self-end rounded-full border border-[#999]" />
      <button type="button" aria-label="Navigationsrad">
        <svg viewBox="0 0 16 16" className="size-[15px]" fill="#eee" stroke="#999" aria-hidden="true">
          <path d="M8 1h7v7a7 7 0 11-7-7z" />
          <circle cx="8" cy="8" r="3.500" />
        </svg>
      </button>
      <Caret />
      <span className="h-px w-[16px] bg-[#b5b5b5]" />
      <button type="button" aria-label="Zoom">
        <svg viewBox="0 0 12 12" className="size-[11px]" aria-hidden="true">
          <path d="M1 1h8v7H1z" fill="#8fbf92" />
          <circle cx="8" cy="8" r="2" fill="#eee" stroke="#888" />
          <path d="M9.500 9.500L12 12" stroke="#888" />
        </svg>
      </button>
      <Caret />
      <span className="mr-[2px] size-[4px] self-end rounded-full border border-[#999]" />
    </div>
  );
}

const viewControls = [
  { name: "detail", label: "Detaillierungsgrad" },
  { name: "visual", label: "Bildstil" },
  { name: "sunoff", label: "Sonnenbahn" },
  { name: "shadow", label: "Schatten" },
  { name: "teapot", label: "Rendern" },
  { name: "cropoff", label: "Ansicht zuschneiden" },
  { name: "crop", label: "Zuschneidebereich" },
  { name: "lock3d", label: "3D-Ansicht sperren" },
  { name: "glasses", label: "Temporär ausblenden" },
  { name: "pinbulb", label: "Verdeckte Elemente" },
  { name: "tempview", label: "Temporäre Ansicht" },
  { name: "analytic", label: "Berechnungsmodell" },
  { name: "displace", label: "Verschiebung" },
  { name: "constraints", label: "Abhängigkeiten" },
];

function Chevron({ path }: { path: string }) {
  return (
    <svg viewBox="0 0 6 6" className="size-[6px]" fill="none" stroke="#333" strokeWidth="1.300" aria-hidden="true">
      <path d={path} />
    </svg>
  );
}

function ViewArea() {
  return (
    <section className="flex min-w-0 grow flex-col">
      <div className="flex h-[15px] items-center justify-between bg-[#cacaca] pr-[5px]">
        <div className="flex h-full w-[81px] items-center bg-white pl-px text-[8px] text-black">
          <Icon name="house" className="size-[11px]" />
          <span className="grow pl-[5px]">&#123;3D&#125;</span>
          <button type="button" aria-label="Ansicht schließen" className="pr-[3px]">
            <svg viewBox="0 0 8 8" className="size-[7px]" stroke="#222" strokeWidth="1.500" aria-hidden="true">
              <path d="M1 1l6 6M7 1L1 7" />
            </svg>
          </button>
        </div>
        <button type="button" aria-label="Registerkarten" className="flex flex-col items-center gap-px">
          <span className="h-px w-[5px] bg-[#333]" />
          <Caret />
        </button>
      </div>
      <div className="flex grow">
        <div className="relative grow overflow-hidden">
          <ModelDrawing />
          <NavigationBar />
        </div>
        <div className="flex w-[15px] flex-col items-center justify-between border-r-3 border-[#d6d6d6] bg-[#f0f0f0] py-[3px]">
          <Chevron path="M1 4l2-2 2 2" />
          <span className="h-[11px] w-[9px] bg-[#cdcdcd]" />
          <Chevron path="M1 2l2 2 2-2" />
        </div>
      </div>
      <div className="flex h-[12px] items-center bg-[#f0f0f0] pr-[5px] pl-[16px] text-[8px]">
        <button type="button" className="w-[34px] text-left whitespace-nowrap">
          1 : 96
        </button>
        <div className="flex w-[199px] items-center justify-between">
          {viewControls.map((control) => (
            <button key={control.name} type="button" aria-label={control.label}>
              <Icon name={control.name} className="size-[11px]" />
            </button>
          ))}
          <Chevron path="M4 1L2 3l2 2" />
        </div>
        <div className="flex grow items-center justify-between pl-[321px]">
          <span className="h-[9px] w-[11px] bg-[#cdcdcd]" />
          <Chevron path="M2 1l2 2-2 2" />
        </div>
        <span className="w-[11px]" />
      </div>
    </section>
  );
}

function StatusSelect({ label, value }: { label: string; value: string }) {
  return (
    <div className="grid w-[133px] shrink-0">
      <select
        aria-label={label}
        className="col-start-1 row-start-1 h-[12px] appearance-none bg-white pl-[2px] text-[8px] leading-[12px] text-[#8a8a8a]"
      >
        <option>{value}</option>
      </select>
      <svg
        viewBox="0 0 8 5"
        className="pointer-events-none col-start-1 row-start-1 mr-[3px] h-[4px] w-[6px] self-center justify-self-end"
        fill="none"
        stroke="#aaa"
        aria-hidden="true"
      >
        <path d="M1 1l3 3 3-3" />
      </svg>
    </div>
  );
}

const selectionTools = [
  { name: "sellink", label: "Verknüpfungen auswählen" },
  { name: "selunder", label: "Unterlagen auswählen" },
  { name: "selpinned", label: "Fixierte auswählen" },
  { name: "selface", label: "Nach Fläche auswählen" },
  { name: "dragsel", label: "Bei Auswahl ziehen" },
  { name: "ring", label: "Hintergrundprozesse" },
  { name: "filter", label: "Filter" },
];

function StatusBar() {
  return (
    <footer className="flex h-[19px] items-center bg-[#cdcdcd] pr-[62px] pb-[2px] pl-[3px] text-[8px] text-black">
      <p className="w-[488px] shrink-0 whitespace-nowrap">
        Zur Auswahl klicken, TABULATOR für andere Auswahl, STRG zum Hinzufügen, UMSCHALT zum Aufheben der Auswahl.
      </p>
      <Icon name="worksets" className="mr-[4px] size-[12px]" />
      <StatusSelect label="Aktiver Bearbeitungsbereich" value="" />
      <Icon name="brush" className="ml-[4px] size-[11px]" />
      <span className="w-[24px] pl-[2px]">:0</span>
      <Icon name="options" className="size-[12px]" />
      <Icon name="optionset" className="mx-[4px] size-[12px]" />
      <StatusSelect label="Entwurfsoption" value="Basisvorlage" />
      <div className="ml-auto flex items-center">
        {selectionTools.map((tool) => (
          <button key={tool.name} type="button" aria-label={tool.label} className="flex w-[17px] justify-center">
            <Icon name={tool.name} className="size-[12px]" />
          </button>
        ))}
        <span>:1</span>
      </div>
    </footer>
  );
}

export default function App() {
  return (
    <div className="flex min-h-screen flex-col bg-[#cbcbcb] font-['Lato',sans-serif]">
      <TitleBar />
      <TabBar />
      <Ribbon />
      <div className="flex h-[17px] items-center border-x-3 border-[#cbcbcb] bg-[#e4eed6] pl-[5px] text-[8px] text-black">
        Ändern | Körper
      </div>
      <main className="relative flex grow">
        <PropertiesPanel />
        <ViewArea />

        {/* enlarged copy of the marked rows */}
        <svg
          viewBox="0 0 740 600"
          className="pointer-events-none absolute top-0 left-0 h-[600px] w-[740px]"
          stroke="#1088a5"
          strokeWidth="2"
          aria-hidden="true"
        >
          <path d="M235 100L737 1M235 437L737 591" />
        </svg>
        <div className="absolute top-0 left-[736px] w-[408px] border-2 border-[#1088a5] font-['Open_Sans','Noto_Sans',sans-serif]">
          <PropertyTable large />
        </div>
      </main>
      <StatusBar />
    </div>
  );
}
